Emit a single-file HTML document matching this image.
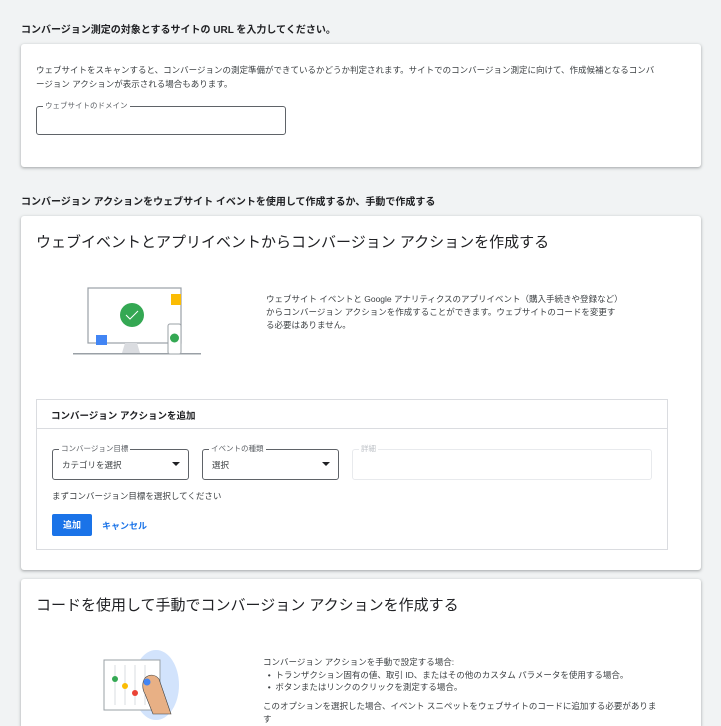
<!DOCTYPE html>
<html style="width:721px;height:726px;overflow:hidden"><head><meta charset="utf-8"><style>
*{margin:0;padding:0;box-sizing:border-box}
body{width:721px;height:726px;overflow:hidden;background:#f1f3f4;font-family:"Liberation Sans","Noto Sans CJK JP",sans-serif;color:#202124;position:relative}
.a{position:absolute;white-space:nowrap}
.card{position:absolute;left:21px;width:680px;background:#fff;border-radius:3px;box-shadow:0 1px 2px rgba(60,64,67,.3),0 1px 3px 1px rgba(60,64,67,.12)}
.h{font-size:10px;font-weight:bold}
.s{font-size:8.5px;color:#3c4043;line-height:14px}
.fld{position:absolute;border:1px solid #5f6368;border-radius:3px}
.lbl{position:absolute;top:-6px;left:6px;background:#fff;padding:0 2px;font-size:7.5px;color:#5f6368;line-height:10px}
.tri{position:absolute;right:8px;top:12px;width:0;height:0;border-left:4px solid transparent;border-right:4px solid transparent;border-top:4px solid #202124}
</style></head><body>
<div class="a h" style="left:21px;top:21px">コンバージョン測定の対象とするサイトの URL を入力してください。</div>
<div class="card" style="top:44px;height:123px">
 <div class="a s" style="left:15px;top:19px">ウェブサイトをスキャンすると、コンバージョンの測定準備ができているかどうか判定されます。サイトでのコンバージョン測定に向けて、作成候補となるコンバ<br>ージョン アクションが表示される場合もあります。</div>
 <div class="fld" style="left:15px;top:62px;width:250px;height:29px"><span class="lbl">ウェブサイトのドメイン</span></div>
</div>
<div class="a h" style="left:21px;top:193px">コンバージョン アクションをウェブサイト イベントを使用して作成するか、手動で作成する</div>
<div class="card" style="top:216px;height:354px">
 <div class="a" style="left:15px;top:15px;font-size:15px">ウェブイベントとアプリイベントからコンバージョン アクションを作成する</div>
 <svg class="a" style="left:52px;top:70px" width="135" height="70" viewBox="0 0 135 70">
  <rect x="15" y="2" width="93" height="55" fill="#fff" stroke="#9aa0a6" stroke-width="1.2"/>
  <circle cx="59" cy="29" r="12" fill="#34a853"/><path d="M53 29l4 4 8-8" stroke="#fff" fill="none" stroke-width="1"/>
  <path d="M52 57h12l3 10h-18z" fill="#dadce0"/>
  <rect x="0" y="67" width="128" height="1.5" fill="#9aa0a6"/>
  <rect x="98" y="8" width="10" height="11" fill="#fbbc04"/>
  <rect x="23" y="49" width="11" height="10" fill="#4285f4"/>
  <rect x="95" y="38" width="13" height="30" rx="2" fill="#fff" stroke="#9aa0a6"/>
  <circle cx="101.5" cy="52" r="4.5" fill="#34a853"/>
 </svg>
 <div class="a s" style="left:245px;top:77px;line-height:13px">ウェブサイト イベントと Google アナリティクスのアプリイベント（購入手続きや登録など）<br>からコンバージョン アクションを作成することができます。ウェブサイトのコードを変更す<br>る必要はありません。</div>
 <div style="position:absolute;left:15px;top:183px;width:632px;height:151px;border:1px solid #dadce0">
  <div class="a" style="left:14px;top:8px;font-size:9.5px;font-weight:bold">コンバージョン アクションを追加</div>
  <div style="position:absolute;left:0;right:0;top:28px;border-top:1px solid #dadce0"></div>
  <div class="fld" style="left:15px;top:49px;width:137px;height:31px"><span class="lbl">コンバージョン目標</span><span class="a" style="left:9px;top:9px;font-size:8.5px;color:#3c4043">カテゴリを選択</span><div class="tri"></div></div>
  <div class="fld" style="left:165px;top:49px;width:137px;height:31px"><span class="lbl">イベントの種類</span><span class="a" style="left:9px;top:9px;font-size:8.5px;color:#3c4043">選択</span><div class="tri"></div></div>
  <div class="fld" style="left:315px;top:49px;width:300px;height:31px;border-color:#e8eaed"><span class="lbl" style="color:#bdc1c6">詳細</span></div>
  <div class="a s" style="left:15px;top:89px">まずコンバージョン目標を選択してください</div>
  <div class="a" style="left:15px;top:114px;width:40px;height:22px;background:#1a73e8;border-radius:2px;color:#fff;font-size:9px;font-weight:bold;text-align:center;line-height:22px">追加</div>
  <div class="a" style="left:65px;top:119px;font-size:9px;color:#1a73e8;font-weight:bold">キャンセル</div>
 </div>
</div>
<div class="card" style="top:579px;height:147px;border-radius:3px 3px 0 0">
 <div class="a" style="left:15px;top:15px;font-size:15px">コードを使用して手動でコンバージョン アクションを作成する</div>
 <svg class="a" style="left:80px;top:71px" width="80" height="70" viewBox="0 0 80 70">
  <ellipse cx="55" cy="35" rx="23" ry="35" fill="#d2e3fc"/>
  <rect x="3" y="10" width="56" height="50" fill="#fff" stroke="#9aa0a6"/>
  <g stroke="#dadce0"><line x1="14" y1="15" x2="14" y2="55"/><line x1="24" y1="15" x2="24" y2="55"/><line x1="34" y1="15" x2="34" y2="55"/><line x1="44" y1="15" x2="44" y2="55"/></g>
  <circle cx="14" cy="29" r="3" fill="#34a853"/><circle cx="24" cy="36" r="3" fill="#fbbc04"/><circle cx="34" cy="43" r="3" fill="#ea4335"/>
  <path d="M44 28c4-4 10-4 14 1l12 35h-18l-8-20c-3-5-3-12 0-16z" fill="#e8b085" stroke="#3c4043" stroke-width=".6"/>
  <circle cx="46" cy="32" r="3.5" fill="#4285f4"/>
 </svg>
 <div class="a s" style="left:242px;top:77px;line-height:12.5px">コンバージョン アクションを手動で設定する場合:<br>&nbsp;&nbsp;•&nbsp;&nbsp;トランザクション固有の値、取引 ID、またはその他のカスタム パラメータを使用する場合。<br>&nbsp;&nbsp;•&nbsp;&nbsp;ボタンまたはリンクのクリックを測定する場合。</div>
 <div class="a s" style="left:242px;top:121px;line-height:13px">このオプションを選択した場合、イベント スニペットをウェブサイトのコードに追加する必要がありま<br>す</div>
</div>
</body></html>
